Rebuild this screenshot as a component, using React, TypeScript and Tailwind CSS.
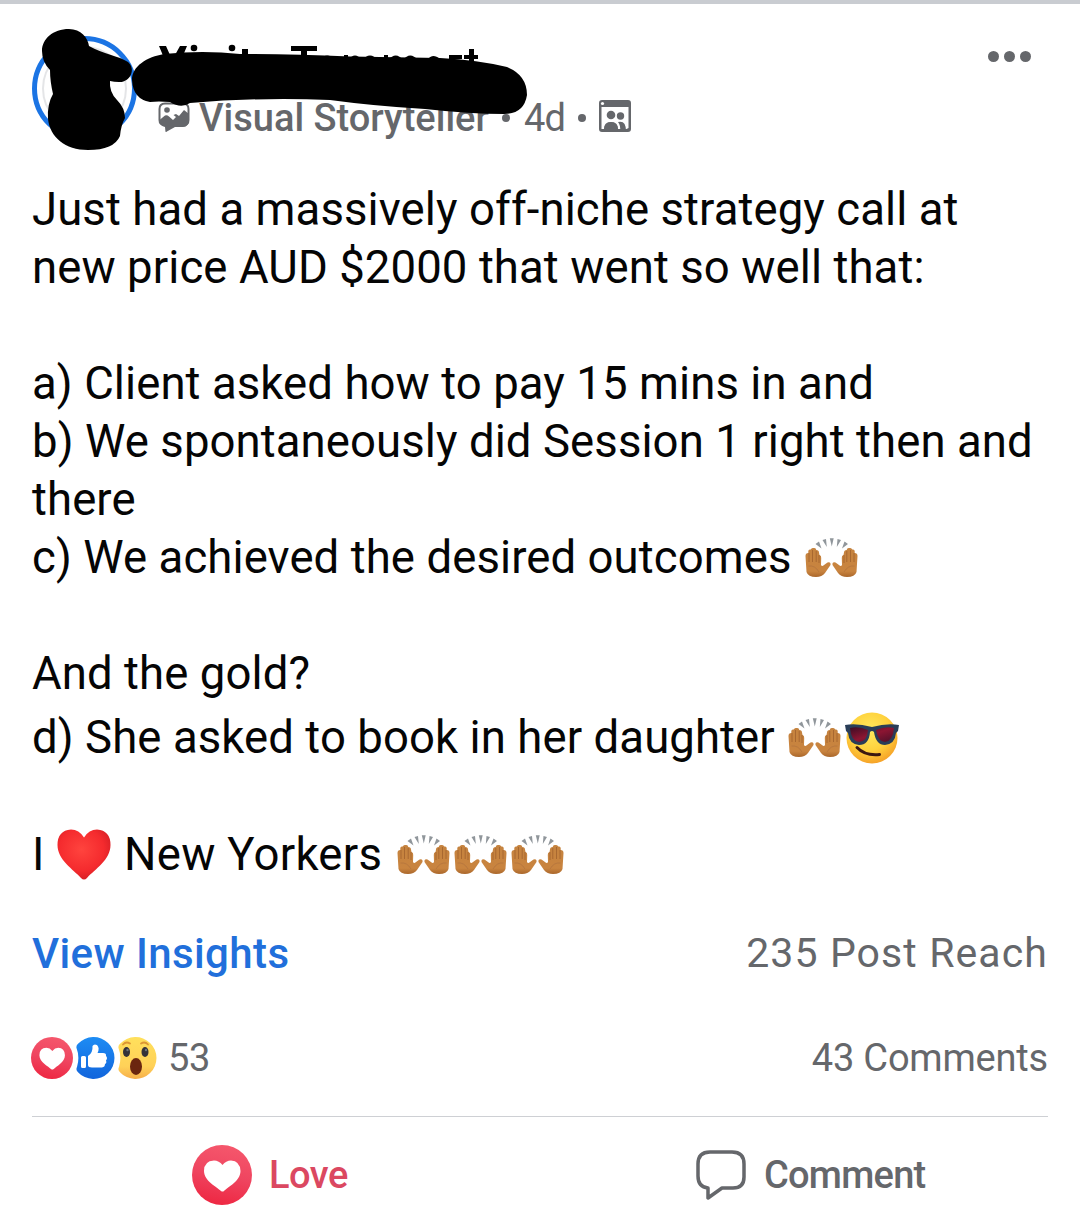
import type { ReactNode } from 'react';

function RaisedHands() {
  const hand = (
    <>
      <path
        d="M0.500 18Q0.500 15 3.300 15V13Q3.500 11 5.700 11.500Q6.500 9.500 8.500 10Q11 9.500 11.300 12Q14 12 14 14.500L14.500 17Q16.500 17.500 16.200 20L16 27Q17 29 19 27L22.500 24.500Q26 23.500 25.500 27L20 35Q17 39 11 39Q3 39 1.500 34Z"
        fill="url(#skin)"
      />
      <path d="M4 15V24M7.500 12V24M11.200 13V24M14 17V25" stroke="#a5652f" strokeWidth="0.900" fill="none" />
      <path d="M3.500 28Q10 27 14 34" stroke="#b3733d" strokeWidth="0.800" fill="none" />
    </>
  );

  return (
    <svg viewBox="0 0 53 40" className="h-[40px] w-[53px] shrink-0">
      <defs>
        <linearGradient id="skin" x1="0" y1="0" x2="0" y2="1">
          <stop stopColor="#c5833f" />
          <stop offset="0.800" stopColor="#c9843f" />
          <stop offset="1" stopColor="#aa672b" />
        </linearGradient>
      </defs>
      {hand}
      <g transform="translate(53 0) scale(-1 1)">{hand}</g>
      <path d="M10.500 6L14 3.500L16.500 10.500ZM17.500 2L21 1L21.800 9ZM24.800 .3H28.700L26.800 8.500ZM32.500 1L36 2L31.800 9ZM39.500 3.500L43 6L37 10.500Z" fill="#90969b" />
    </svg>
  );
}

function CoolFace() {
  return (
    <svg viewBox="0 0 54 52" className="h-[52px] w-[54px] shrink-0">
      <defs>
        <radialGradient id="cool" cx="0.45" cy="0.35" r="0.65">
          <stop stopColor="#ffe95e" />
          <stop offset="0.600" stopColor="#ffd23d" />
          <stop offset="1" stopColor="#f6a328" />
        </radialGradient>
        <linearGradient id="lens" x1="0" y1="0" x2="1" y2="1">
          <stop stopColor="#3c0d25" />
          <stop offset="0.500" stopColor="#8c1532" />
          <stop offset="1" stopColor="#4b1029" />
        </linearGradient>
      </defs>
      <circle cx="27" cy="26" r="25.500" fill="url(#cool)" />
      <path d="M0 13Q12 11 27 15Q42 11 54 13L53 19L51 21Q50 32 40 33Q31 33 29 20Q27 18 25 20Q24 33 14 33Q4 32 3 21L1 19Z" fill="#293d58" />
      <path d="M5 16Q14 14 23 18Q22 30 14 30Q6 29 5 16ZM31 18Q40 14 49 16Q48 29 40 30Q33 30 31 18Z" fill="url(#lens)" />
      <path d="M12 35.500Q20 44 34.500 42.500" fill="none" stroke="#3b1711" strokeWidth="3" strokeLinecap="round" />
    </svg>
  );
}

function RedHeart() {
  return (
    <svg viewBox="0 0 54 51" className="h-[51px] w-[54px] shrink-0">
      <defs>
        <radialGradient id="heart" cx="0.45" cy="0.4" r="0.6">
          <stop stopColor="#ff443e" />
          <stop offset="0.700" stopColor="#f52b2e" />
          <stop offset="1" stopColor="#d92026" />
        </radialGradient>
      </defs>
      <path d="M27 8.500Q22 0.500 14 0.500Q0.500 1.500 0.500 16C0.500 31 16 40 24 49Q27 52 30 49C38 40 53.500 31 53.500 16Q53.500 1.500 40 0.500Q32 0.500 27 8.500Z" fill="url(#heart)" />
    </svg>
  );
}

function LoveBadge({ className }: { className: string }) {
  return (
    <svg viewBox="0 0 60 60" className={className}>
      <defs>
        <linearGradient id="love" x1="0.6" y1="0" x2="0.4" y2="1">
          <stop stopColor="#f5576c" />
          <stop offset="0.500" stopColor="#ef4560" />
          <stop offset="1" stopColor="#ee2742" />
        </linearGradient>
      </defs>
      <circle cx="30" cy="30" r="30" fill="url(#love)" />
      <path d="M30.500 20Q27 15.500 22 15.500Q12 16 12 26C12 36 25 42 29 46Q30.500 47 32 46C36 42 48.500 36 48.500 26Q48 16 39 15.500Q34 15.500 30.500 20Z" fill="#fff" />
    </svg>
  );
}

function LikeBadge() {
  return (
    <svg viewBox="0 0 40 42" className="h-[42px] w-[40px]">
      <defs>
        <linearGradient id="like" x1="0" y1="0" x2="0" y2="1">
          <stop stopColor="#1d8cf4" />
          <stop offset="1" stopColor="#1265dc" />
        </linearGradient>
      </defs>
      <path d="M3 6.800A21 21 0 1 1 3 35.200Q0.500 33 2 30Q5 20 1.500 11Q1 8.500 3 6.800Z" fill="url(#like)" />
      <path d="M6 20.500Q6 19 7.500 19H9.500Q11 19 11 20.500V29.500Q11 31 9.500 31H7.500Q6 31 6 29.500ZM13 19Q18 16 17.500 9Q19 6.500 22 8Q25 11 22.500 16H28Q31.500 16 31 19Q33 21 31 23.500Q32 26 30 27Q30 30 27 30.500H17Q13 30.500 13 28Z" fill="#fff" />
    </svg>
  );
}

function WowBadge() {
  return (
    <svg viewBox="0 0 40 42" className="h-[42px] w-[40px]">
      <defs>
        <linearGradient id="wow" x1="0" y1="0" x2="0" y2="1">
          <stop stopColor="#ffe05c" />
          <stop offset="0.700" stopColor="#ffd158" />
          <stop offset="1" stopColor="#f6ae4a" />
        </linearGradient>
      </defs>
      <path d="M3 6.800A21 21 0 1 1 3 35.200Q0.500 33 2 30Q5 20 1.500 11Q1 8.500 3 6.800Z" fill="url(#wow)" />
      <path d="M6 7.500Q9 4 13 6.500M24 6.500Q28 4 31 7.500" stroke="#dc9633" strokeWidth="1.800" strokeLinecap="round" fill="none" />
      <ellipse cx="9.500" cy="15" rx="3.500" ry="5" fill="#353239" />
      <ellipse cx="28" cy="15" rx="3.500" ry="5" fill="#353239" />
      <circle cx="10.500" cy="13" r="1.200" fill="#6b737c" />
      <circle cx="29" cy="13" r="1.200" fill="#6b737c" />
      <ellipse cx="19" cy="29.500" rx="6" ry="8.500" fill="#6b260f" />
    </svg>
  );
}

function StorytellerIcon() {
  return (
    <svg viewBox="0 0 32 31" className="mb-[2px] h-[31px] w-[32px]">
      <path d="M7 1.500H25Q30.500 1.500 30.500 7V18Q30.500 23 25 23H15L8.500 28V23H7Q1.500 23 1.500 18V7Q1.500 1.500 7 1.500Z" fill="none" stroke="#65676b" strokeWidth="2" />
      <path d="M1.500 18L7 13.500Q9 12.500 11 14.500L15 18L18 15L15.500 13L18 12L21 14L26 8L31 12V19Q30 25 25 25H17L8 30L7 25Q2 24 1.500 18Z" fill="#65676b" />
      <circle cx="9" cy="8" r="2.800" fill="#65676b" />
    </svg>
  );
}

function GroupIcon() {
  return (
    <svg viewBox="0 0 32 32" className="mb-[4px] h-[32px] w-[32px]">
      <path d="M3 0H29Q32 0 32 3V29Q32 32 29 32H3Q0 32 0 29V3Q0 0 3 0ZM2.500 7V29H5Q5 22 12 22Q19 22 19 29H27.500L29.500 28V7Z" fill="#65676b" fillRule="evenodd" />
      <path d="M5 31Q5 22 12 22Q19 22 19 31ZM19 22Q27 20 27 31H21Q22 26 19 22Z" fill="#65676b" />
      <circle cx="12" cy="15" r="4.300" fill="#65676b" />
      <circle cx="21.500" cy="16" r="3.700" fill="#65676b" />
      <circle cx="3.500" cy="3.500" r="1.600" fill="#fff" />
    </svg>
  );
}

// Marker strokes hiding the avatar and the name
function Redaction() {
  return (
    <svg viewBox="0 0 540 160" className="pointer-events-none absolute left-0 -top-1 h-[160px] w-[540px]">
      <path d="M159 46H166L170 55H175L180 46H187L182 58H164ZM242 49H248V57H242ZM291 46H317V51H307V57H301V51H291ZM449 55H462V59H449ZM464 55H469V49H474V55H478V59H474V64H469V59H464Z" />
      <circle cx="194" cy="48" r="3.300" />
      <circle cx="232" cy="48" r="3.300" />
      <path d="M320 60Q327 51 335 60H344V55H348V60Q355 51 362 60Q370 51 378 60H384V55H388V60Q396 51 403 60Q410 51 418 60H427Q434 51 443 62Z" />
      <path d="M42 51C42 39 53 29 69 29C81 29 88 38 89 46C103 54 119 56 128 62C137 70 129 83 119 82Q114 82 110 81Q109 92 117 100Q125 108 125 118Q121 125 120 136Q114 150 88 150C65 150 50 137 48 119Q47 104 53 94Q50 81 50 70Q42 62 42 51Z" />
      <path d="M132 80C132 66 147 57 164 54Q203 50 240 54Q290 54 350 56.500L440 58Q478 60 507 67Q527 75 527 95Q524 114 504 114Q470 114 425 109Q374 106 330 100Q260 97 190 103Q181 109 170 102Q158 101 150 102Q133 99 132 80Z" />
    </svg>
  );
}

function Line({ children, className = '' }: { children?: ReactNode; className?: string }) {
  return <div className={`flex h-[58px] items-center whitespace-pre ${className}`}>{children}</div>;
}

export default function App() {
  return (
    <div className="relative flex h-[1229px] w-[1080px] flex-col overflow-hidden border-t-4 border-[#c9ccd1] bg-white font-['Roboto',sans-serif] text-[#65676b]">
      <header className="flex h-[177px] shrink-0 items-start justify-between pl-8 pr-[49px]">
        <div className="flex">
          <div className="mt-8 h-[105px] w-[105px] rounded-full border-[5px] border-[#1b74e4] p-[5px]">
            <div className="h-full w-full rounded-full border-2 border-[#e4e5e7]" />
          </div>
          <div className="ml-[21px] mt-[93px] flex h-[42px] items-center text-[38px] leading-[42px]">
            <StorytellerIcon />
            <span className="ml-[9px] w-[288px] whitespace-nowrap font-medium">Visual Storyteller</span>
            <span className="ml-[15px] mr-[14px] h-2 w-2 rounded-full bg-[#65676b]" />
            <span className="w-[41px] text-[38px] tracking-[-0.9px]">4d</span>
            <span className="ml-[13px] mr-[13px] h-2 w-2 rounded-full bg-[#65676b]" />
            <GroupIcon />
          </div>
        </div>
        <div className="mt-[47px] flex gap-[5px]">
          <span className="h-[11px] w-[11px] rounded-full bg-[#65676b]" />
          <span className="h-[11px] w-[11px] rounded-full bg-[#65676b]" />
          <span className="h-[11px] w-[11px] rounded-full bg-[#65676b]" />
        </div>
      </header>

      <main className="pl-[32px] text-[45.5px] leading-[58px] tracking-[0.09px] text-[#050505]">
        <Line>Just had a massively off-niche strategy call at</Line>
        <Line>new price AUD $2000 that went so well that:</Line>
        <Line />
        <Line>a) Client asked how to pay 15 mins in and</Line>
        <Line>b) We spontaneously did Session 1 right then and</Line>
        <Line>there</Line>
        <Line>
          <span className="mr-[13px]">c) We achieved the desired outcomes</span>
          <RaisedHands />
        </Line>
        <Line />
        <Line>And the gold?</Line>
        <Line className="mt-[6px]">
          <span className="mr-[13px]">d) She asked to book in her daughter</span>
          <RaisedHands />
          <span className="ml-[4px]"><CoolFace /></span>
        </Line>
        <Line />
        <Line className="pt-px">
          <span className="w-[25px]">I</span>
          <RedHeart />
          <span className="ml-[13px] w-[259px] tracking-[0.3px]">New Yorkers</span>
          <span className="ml-[14px] flex gap-1">
            <RaisedHands />
            <RaisedHands />
            <RaisedHands />
          </span>
        </Line>
      </main>

      <section className="mt-[46px] flex h-[48px] items-center justify-between pl-[32px] pr-8 text-[41px] leading-[48px]">
        <a className="pt-px text-[42px] font-medium tracking-[0.4px] text-[#216fdb]">View Insights</a>
        <span className="tracking-[1.1px]">235 Post Reach</span>
      </section>
      <section className="mt-[57px] flex h-[48px] items-center justify-between pl-[31px] pr-8 text-[38px]">
        <div className="flex items-center">
          <LoveBadge className="h-[42px] w-[42px]" />
          <span className="ml-[2px]"><LikeBadge /></span>
          <span className="ml-[2px]"><WowBadge /></span>
          <span className="ml-[11px] tracking-[-0.4px]">53</span>
        </div>
        <span className="tracking-[-0.2px]">43 Comments</span>
      </section>

      <footer className="mx-8 mt-[34px] flex h-[113px] shrink-0 border-t border-[#ced0d4] pt-[4px] text-[38px] font-medium tracking-[-0.5px]">
        <div className="flex w-[508px] items-center pl-[160px] text-[#db4861]">
          <LoveBadge className="h-[60px] w-[60px]" />
          <span className="ml-[17px]">Love</span>
        </div>
        <div className="flex items-center pl-[156px]">
          <svg viewBox="0 0 50 50" className="h-[50px] w-[50px] fill-none stroke-[#65676b]" strokeWidth="3.500" strokeLinejoin="round">
            <path d="M14 2H36Q48 2 48 14V27Q48 38 37 38H26L12 48V38Q2 37 2 26V14Q2 2 14 2Z" />
          </svg>
          <span className="ml-[18px] tracking-[-0.75px]">Comment</span>
        </div>
      </footer>
      <Redaction />
    </div>
  );
}
